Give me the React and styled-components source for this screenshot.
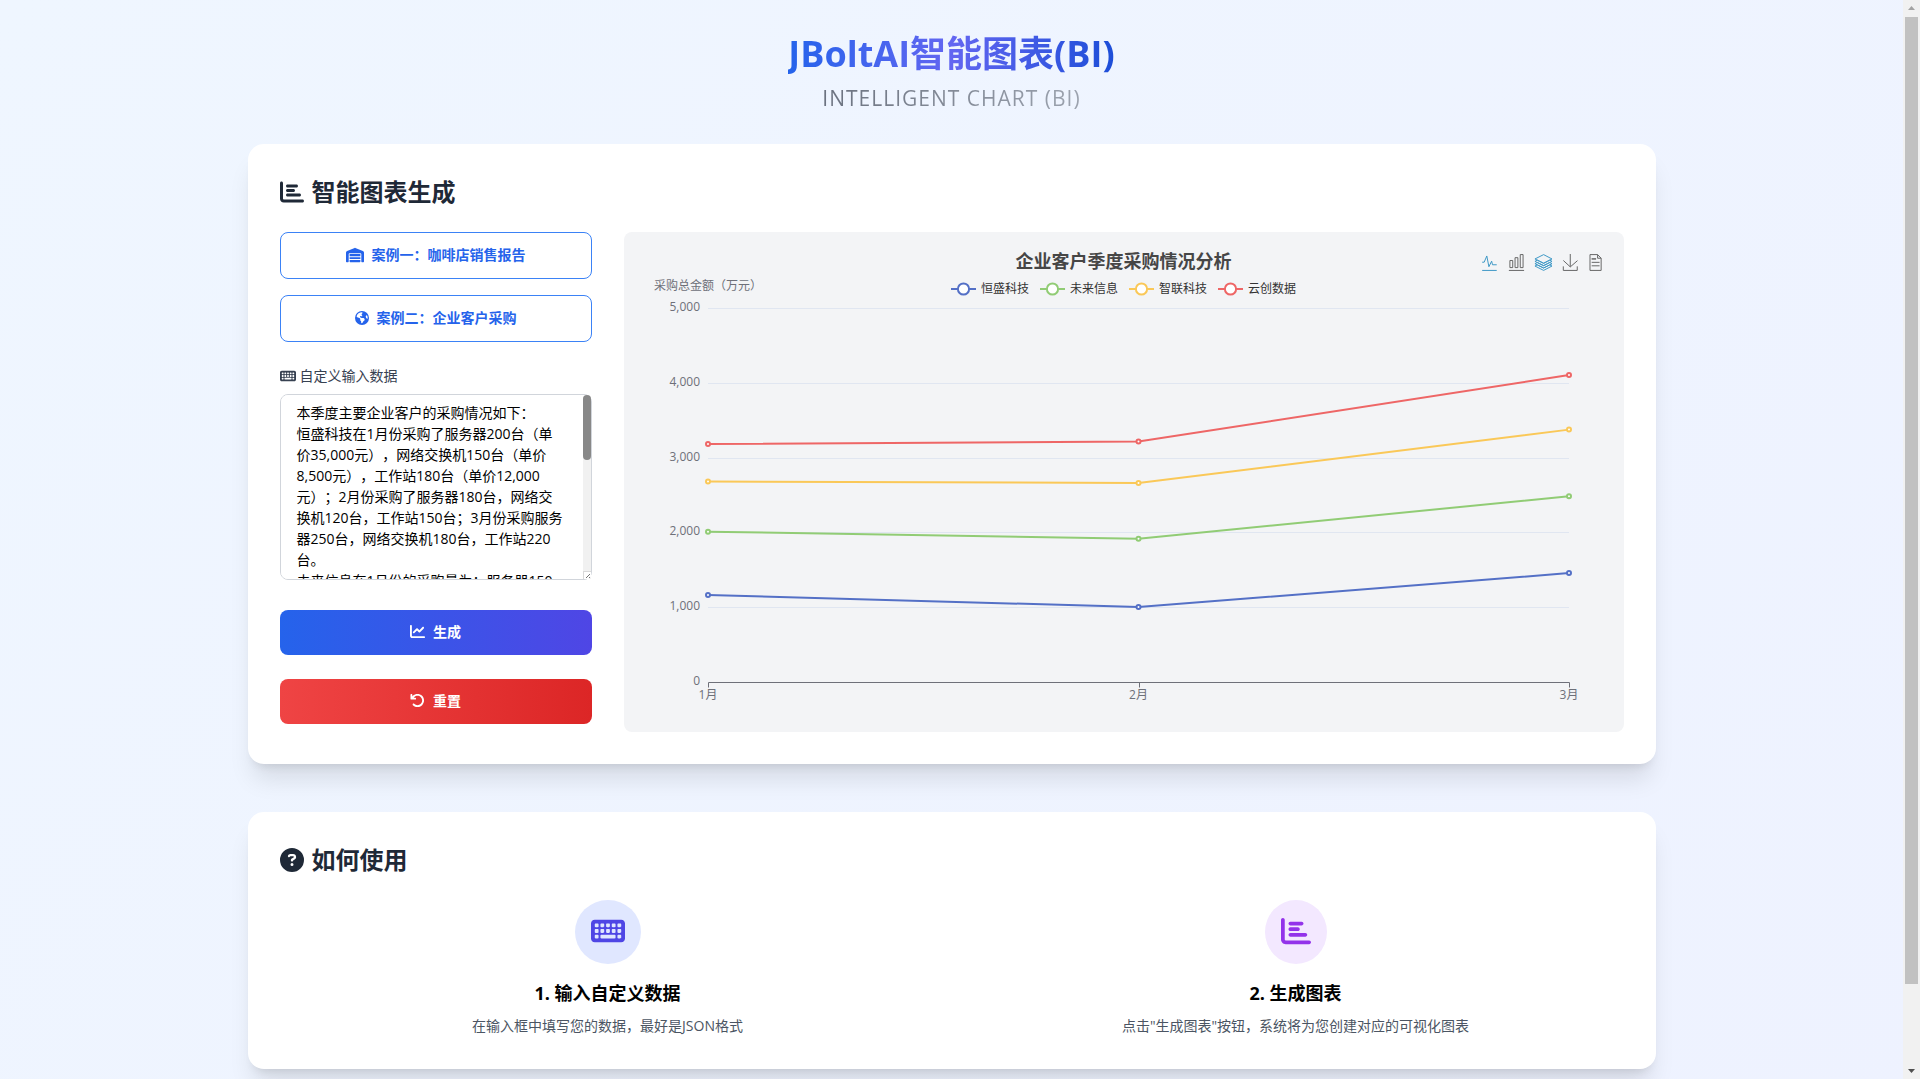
import React, { useState } from 'react'
import styled, { createGlobalStyle } from 'styled-components'
import {
	FaArrowRotateLeft,
	FaChartBar,
	FaChartLine,
	FaCircleQuestion,
	FaEarthAmericas,
	FaKeyboard,
	FaWarehouse,
} from 'react-icons/fa6'

const CASE_COFFEE = `本季度咖啡店销售情况如下：
1月份售出美式咖啡1200杯，拿铁咖啡1500杯，卡布奇诺800杯；
2月份售出美式咖啡1100杯，拿铁咖啡1350杯，卡布奇诺760杯；
3月份售出美式咖啡1400杯，拿铁咖啡1720杯，卡布奇诺910杯。`

const CASE_CUSTOMER = `本季度主要企业客户的采购情况如下：
恒盛科技在1月份采购了服务器200台（单价35,000元），网络交换机150台（单价8,500元），工作站180台（单价12,000元）；2月份采购了服务器180台，网络交换机120台，工作站150台；3月份采购服务器250台，网络交换机180台，工作站220台。
未来信息在1月份的采购量为：服务器150台，网络交换机200台，工作站160台；2月份采购服务器140台，网络交换机190台，工作站150台；3月份采购服务器190台，网络交换机230台，工作站200台。
智联科技在1月份采购服务器210台，网络交换机170台，工作站190台；2月份采购服务器205台，网络交换机165台，工作站185台；3月份采购服务器260台，网络交换机210台，工作站240台。
云创数据在1月份采购服务器240台，网络交换机190台，工作站210台；2月份采购服务器245台，网络交换机195台，工作站215台；3月份采购服务器300台，网络交换机260台，工作站280台。`

const months = ['1月', '2月', '3月']

const series = [
	{ name: '恒盛科技', color: '#5470c6', values: [1164, 1002, 1456] },
	{ name: '未来信息', color: '#91cc75', values: [2010, 1915, 2484] },
	{ name: '智联科技', color: '#fac858', values: [2680, 2660, 3374] },
	{ name: '云创数据', color: '#ee6666', values: [3182, 3214, 4104] },
]

const tools = [
	{
		label: '切换为折线图',
		active: true,
		d: 'M4.1,28.9h7.1l9.3-22l7.4,38l9.7-19.7l3,12.8h14.9M4.1,58h51.4',
	},
	{
		label: '切换为柱状图',
		d: 'M6.7,22.9h10V48h-10V22.9z M24.9,13h10v35h-10V13z M43.2,2h10v46h-10V2z M3.1,58h53.7',
	},
	{
		label: '切换为堆叠',
		active: true,
		d: 'M8.2,38.4l-8.4,4.1l30.6,15.3L60,42.5l-8.1-4.1l-21.5,11L8.2,38.4z M51.9,30l-8.1,4.2l-13.4,6.9l-13.9-6.9L8.2,30l-8.4,4.2l8.4,4.2l22.2,11l21.5-11l8.1-4.2L51.9,30z M51.9,21.7l-8.1,4.2L35.7,30l-5.3,2.8L24.9,30l-8.4-4.1l-8.3-4.2l-8.4,4.2L8.2,30l8.3,4.2l13.9,6.9l13.4-6.9l8.1-4.2l8.1-4.1L51.9,21.7z M30.4,2.2L-0.2,17.5l8.4,4.1l8.3,4.2l8.4,4.2l5.5,2.7l5.3-2.7l8.1-4.2l8.1-4.2l8.1-4.1L30.4,2.2z',
	},
	{
		label: '保存为图片',
		d: 'M4.7,22.9L29.3,45.5L54.7,23.4M4.6,43.6L4.6,58L53.8,58L53.8,43.6M29.2,45.1L29.2,0',
	},
	{
		label: '数据视图',
		narrow: true,
		d: 'M17.5,17.3H33 M17.5,17.3H33 M45.4,29.5h-28 M11.5,2v56H51V14.8L38.4,2H11.5z M38.4,2.2v12.7H51 M45.4,41.7h-28',
	},
]

// plot area inside the 1000 x 436 chart drawing
const plot = { left: 84, right: 945, top: 12, bottom: 386, max: 5000 }
const xAt = (i) => plot.left + ((plot.right - plot.left) * i) / (months.length - 1)
const yAt = (v) => plot.bottom - ((plot.bottom - plot.top) * v) / plot.max

const GlobalStyle = createGlobalStyle`
	*, *::before, *::after {
		box-sizing: border-box;
	}
	body {
		margin: 0;
		font-family: 'Open Sans', 'Noto Sans CJK SC', sans-serif;
		font-size: 14px;
		line-height: 21px;
		color: #000;
		text-spacing-trim: space-all;
	}
	h1, h2, h3, p {
		margin: 0;
	}
	button, textarea {
		font: inherit;
		text-spacing-trim: inherit;
	}
`

const Shell = styled.div`
	display: flex;
	height: 100vh;
`

const Page = styled.div`
	flex: 1;
	min-width: 0;
	overflow-y: auto;
	scrollbar-width: none;
`

const PageBody = styled.div`
	display: flex;
	flex-direction: column;
	align-items: center;
	padding: 32px 16px 96px;
	background: linear-gradient(135deg, #eff6ff, #eef2ff);
`

const Rail = styled.div`
	display: flex;
	flex-direction: column;
	align-items: center;
	width: 17px;
	background: #f1f1f1;
`

const RailArrow = styled.svg`
	width: 17px;
	height: 17px;
	fill: ${(props) => (props.$dim ? '#a3a3a3' : '#505050')};
`

const RailTrack = styled.div`
	flex: 1;
	width: 13px;
`

const RailThumb = styled.div`
	height: 92.5%;
	background: #c1c1c1;
`

const Header = styled.header`
	display: flex;
	flex-direction: column;
	align-items: center;
	gap: 8px;
	margin-bottom: 32px;
`

const Title = styled.h1`
	font-size: 36px;
	line-height: 44px;
	font-weight: 700;
	color: transparent;
	background: linear-gradient(90deg, #2563eb, #6366f1, #1d4ed8);
	background-clip: text;
`

const Subtitle = styled.p`
	font-size: 21px;
	line-height: 28px;
	letter-spacing: 1px;
	color: transparent;
	background: linear-gradient(90deg, #6b7280, #9ca3af);
	background-clip: text;
`

const Main = styled.main`
	display: flex;
	flex-direction: column;
	gap: 48px;
	width: 100%;
	max-width: 1408px;
`

const Card = styled.section`
	padding: 32px;
	border-radius: 16px;
	background: #fff;
	box-shadow:
		0 20px 25px -5px rgba(0, 0, 0, 0.1),
		0 8px 10px -6px rgba(0, 0, 0, 0.1);
`

const CardTitle = styled.h2`
	display: flex;
	align-items: center;
	gap: 8px;
	margin-bottom: 24px;
	font-size: 24px;
	line-height: 32px;
	font-weight: 700;
	color: #1f2937;
`

const Workspace = styled.div`
	display: grid;
	grid-template-columns: repeat(4, minmax(0, 1fr));
	gap: 32px;
`

const Controls = styled.form`
	display: flex;
	flex-direction: column;
`

const CaseList = styled.div`
	display: flex;
	flex-direction: column;
	gap: 16px;
	margin-bottom: 23px;
`

const Button = styled.button`
	display: flex;
	align-items: center;
	justify-content: center;
	gap: 8px;
	width: 100%;
	padding: 11px 16px 13px;
	border: 0;
	border-radius: 8px;
	font-weight: 700;
	cursor: pointer;
`

const CaseButton = styled(Button)`
	border: 1px solid #3b82f6;
	background: #fff;
	color: #2563eb;
`

const ActionButton = styled(Button)`
	background: linear-gradient(90deg, ${(props) => props.$from}, ${(props) => props.$to});
	color: #fff;
`

const Actions = styled.div`
	display: flex;
	flex-direction: column;
	gap: 24px;
	margin-top: 30px;
`

const FieldLabel = styled.label`
	display: flex;
	align-items: center;
	gap: 4px;
	margin-bottom: 8px;
	color: #374151;
`

const Field = styled.div`
	position: relative;
`

const DataInput = styled.textarea`
	display: block;
	width: 100%;
	padding: 7px 26px 9px 16px;
	border: 1px solid #d1d5db;
	border-radius: 8px;
	background: #fff;
	color: #000;
	resize: none;
	scrollbar-width: none;
`

// thin scroll bar laid over the right edge of the text box
const FieldBar = styled.div`
	position: absolute;
	top: 1px;
	right: 1px;
	bottom: 1px;
	display: flex;
	flex-direction: column;
	width: 8px;
	border-radius: 4px 4px 0 0;
	background: #f1f1f1;
	pointer-events: none;
`

const FieldTrack = styled.div`
	flex: 1;
`

const FieldThumb = styled.div`
	height: 37%;
	border-radius: 4px;
	background: #888;
`

const FieldGrip = styled.svg`
	width: 8px;
	height: 8px;
	background: #fff;
	border-top: 1px solid #d9d9d9;
	border-left: 1px solid #d9d9d9;
	border-bottom-right-radius: 4px;
`

const ChartPanel = styled.div`
	position: relative;
	grid-column: span 3;
	display: flex;
	flex-direction: column;
	align-items: center;
	padding-top: 16px;
	border-radius: 8px;
	background: #f3f4f6;
`

const ChartTitle = styled.h3`
	margin-bottom: 8px;
	font-size: 18px;
	line-height: 26px;
	font-weight: 700;
	color: #464646;
`

const Legend = styled.div`
	display: flex;
	gap: 11px;
	font-size: 12px;
	line-height: 14px;
	color: #333;
`

const LegendItem = styled.span`
	display: flex;
	align-items: center;
	gap: 5px;
`

const Toolbox = styled.div`
	position: absolute;
	top: 22px;
	right: 22px;
	display: flex;
	gap: 10px;
`

const ToolButton = styled.button`
	display: flex;
	padding: 0;
	border: 0;
	background: none;
	color: ${(props) => (props.$active ? '#3e98c5' : '#666')};
	cursor: pointer;
`

const Plot = styled.svg`
	display: block;
	width: 100%;
	overflow: visible;
	font-size: 12px;
	fill: #6e7079;
`

const Steps = styled.div`
	display: grid;
	grid-template-columns: repeat(2, minmax(0, 1fr));
	gap: 32px;
`

const Step = styled.div`
	display: flex;
	flex-direction: column;
	align-items: center;
	text-align: center;
`

const StepIcon = styled.div`
	display: flex;
	align-items: center;
	height: 64px;
	margin-bottom: 15px;
	padding: 0 16px 2px;
	border-radius: 50%;
	font-size: 30px;
	background: ${(props) => props.$bg};
	color: ${(props) => props.$color};
`

const StepTitle = styled.h3`
	margin-bottom: 8px;
	font-size: 18px;
	line-height: 28px;
	font-weight: 700;
`

const StepText = styled.p`
	margin-bottom: 1px;
	color: #4b5563;
`

const LineChart = () => (
	<ChartPanel>
		<ChartTitle>企业客户季度采购情况分析</ChartTitle>
		<Legend>
			{series.map((s) => (
				<LegendItem key={s.name}>
					<svg width='25' height='14' viewBox='0 0 25 14' fill='#fff' stroke={s.color} strokeWidth='2'>
						<path d='M0 7h25' />
						<circle cx='12.5' cy='7' r='5.6' />
					</svg>
					{s.name}
				</LegendItem>
			))}
		</Legend>
		<Toolbox>
			{tools.map((t) => (
				<ToolButton key={t.label} type='button' aria-label={t.label} $active={t.active}>
					<svg
						width={t.narrow ? 13 : 17}
						height='17'
						viewBox={t.narrow ? '8 0 46 60' : '0 0 60 60'}
						fill='none'
						stroke='currentColor'
						strokeWidth='3.5'
						overflow='visible'
					>
						<path d={t.d} />
					</svg>
				</ToolButton>
			))}
		</Toolbox>
		<Plot viewBox='0 0 1000 436' role='img' aria-label='企业客户季度采购情况分析'>
			<text x='30' y='-6'>
				采购总金额（万元）
			</text>
			{[0, 1000, 2000, 3000, 4000, 5000].map((v) => (
				<g key={v}>
					{v > 0 && (
						<path d={`M${plot.left} ${Math.round(yAt(v)) + 0.5}H${plot.right}`} stroke='#e0e6f1' />
					)}
					<text x='76' y={Math.round(yAt(v)) + 3} textAnchor='end'>
						{v.toLocaleString('en-US')}
					</text>
				</g>
			))}
			<path
				d={`M84.5 391.5v-5H${plot.right + 0.5}v5M515.5 386.5v5`}
				fill='none'
				stroke='#6e7079'
			/>
			{months.map((m, i) => (
				<text key={m} x={xAt(i)} y='403' textAnchor='middle'>
					{m}
				</text>
			))}
			{series.map((s) => (
				<g key={s.name} fill='#fff' stroke={s.color} strokeWidth='2'>
					<polyline fill='none' points={s.values.map((v, i) => `${xAt(i)},${yAt(v)}`).join(' ')} />
					{s.values.map((v, i) => (
						<circle key={i} cx={xAt(i)} cy={yAt(v)} r='2' />
					))}
				</g>
			))}
		</Plot>
	</ChartPanel>
)

const App = () => {
	const [text, setText] = useState(CASE_CUSTOMER)

	return (
		<Shell>
			<GlobalStyle />
			<Page>
				<PageBody>
					<Header>
						<Title>JBoltAI智能图表(BI)</Title>
						<Subtitle>INTELLIGENT CHART (BI)</Subtitle>
					</Header>
					<Main>
						<Card>
							<CardTitle>
								<FaChartBar />
								智能图表生成
							</CardTitle>
							<Workspace>
								<Controls onSubmit={(e) => e.preventDefault()}>
									<CaseList>
										<CaseButton type='button' onClick={() => setText(CASE_COFFEE)}>
											<FaWarehouse size={18} />
											案例一：咖啡店销售报告
										</CaseButton>
										<CaseButton type='button' onClick={() => setText(CASE_CUSTOMER)}>
											<FaEarthAmericas />
											案例二：企业客户采购
										</CaseButton>
									</CaseList>
									<FieldLabel htmlFor='custom-data'>
										<FaKeyboard size={16} />
										自定义输入数据
									</FieldLabel>
									<Field>
										<DataInput
											id='custom-data'
											rows={8}
											value={text}
											onChange={(e) => setText(e.target.value)}
										/>
										<FieldBar aria-hidden='true'>
											<FieldTrack>
												<FieldThumb />
											</FieldTrack>
											<FieldGrip viewBox='0 0 7 7' stroke='#777' fill='none'>
												<path d='M2 6l4-4M5 6l1-1' />
											</FieldGrip>
										</FieldBar>
									</Field>
									<Actions>
										<ActionButton type='submit' $from='#2563eb' $to='#4f46e5'>
											<FaChartLine size={15} />
											生成
										</ActionButton>
										<ActionButton type='button' $from='#ef4444' $to='#dc2626' onClick={() => setText('')}>
											<FaArrowRotateLeft size={15} />
											重置
										</ActionButton>
									</Actions>
								</Controls>
								<LineChart />
							</Workspace>
						</Card>
						<Card>
							<CardTitle>
								<FaCircleQuestion />
								如何使用
							</CardTitle>
							<Steps>
								<Step>
									<StepIcon $bg='#e0e7ff' $color='#4f46e5'>
										<FaKeyboard size={34} />
									</StepIcon>
									<StepTitle>1. 输入自定义数据</StepTitle>
									<StepText>在输入框中填写您的数据，最好是JSON格式</StepText>
								</Step>
								<Step>
									<StepIcon $bg='#f3e8ff' $color='#9333ea'>
										<FaChartBar />
									</StepIcon>
									<StepTitle>2. 生成图表</StepTitle>
									<StepText>点击"生成图表"按钮，系统将为您创建对应的可视化图表</StepText>
								</Step>
							</Steps>
						</Card>
					</Main>
				</PageBody>
			</Page>
			<Rail aria-hidden='true'>
				<RailArrow $dim viewBox='0 0 17 17'>
					<path d='M5 10h7l-3.5-4z' />
				</RailArrow>
				<RailTrack>
					<RailThumb />
				</RailTrack>
				<RailArrow viewBox='0 0 17 17'>
					<path d='M5 7h7l-3.5 4z' />
				</RailArrow>
			</Rail>
		</Shell>
	)
}

export default App
